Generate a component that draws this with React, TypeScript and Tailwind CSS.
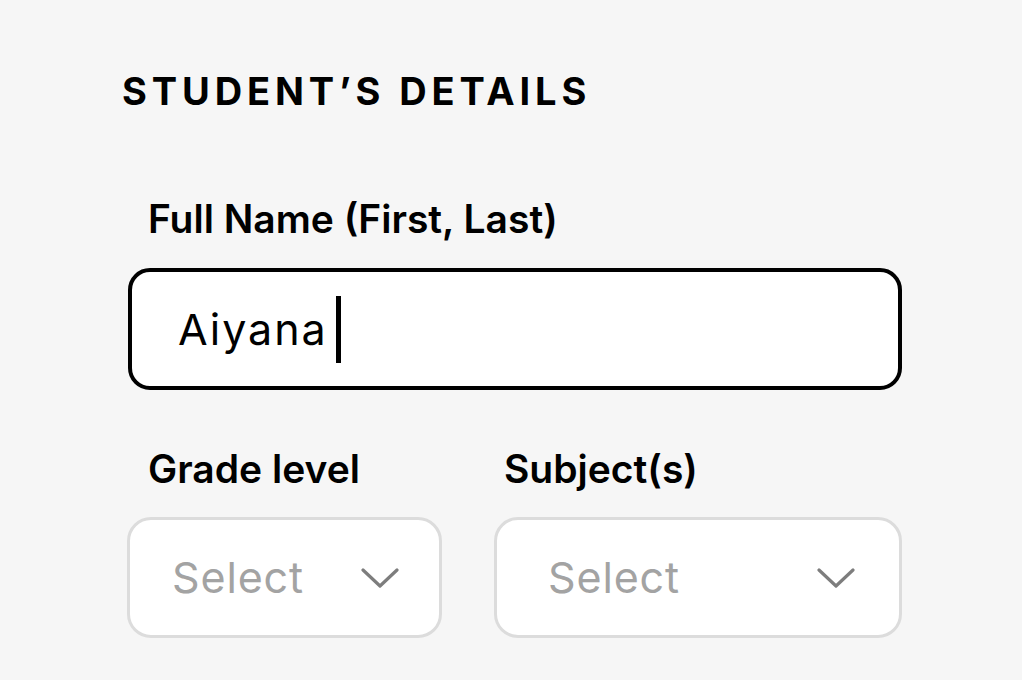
import React from "react";

function Chevron() {
  return (
    <svg width="38" height="22" viewBox="0 0 38 22" fill="none">
      <path d="M2 3 L19 19 L36 3" stroke="#7d7d7d" strokeWidth="3.2" strokeLinecap="round" strokeLinejoin="round" />
    </svg>
  );
}

export default function App() {
  return (
    <div
      className="min-h-screen bg-[#f6f6f6] text-black"
      style={{ fontFamily: "Inter, 'Noto Sans', sans-serif" }}
    >
      <div className="pt-[68px] pl-[122px]">
        <h2 className="text-[38px] leading-[46px] font-bold tracking-[0.128em]">STUDENT’S DETAILS</h2>
      </div>

      <div className="ml-[128px] w-[774px] mt-[81px]">
        <label className="block pl-[20px] text-[39px] leading-[48px] font-semibold">Full Name (First, Last)</label>
        <div className="mt-[25px] h-[122px] rounded-[22px] border-4 border-black bg-white flex items-center pl-[46px]">
          <span className="text-[43px] leading-none tracking-[0.045em]">Aiyana</span>
          <span className="ml-[8px] w-[5px] h-[67px] bg-black" />
        </div>

        <div className="mt-[55px] flex gap-[52px]">
          <div className="w-[315px] -ml-px">
            <label className="block pl-[21px] text-[39px] leading-[48px] font-semibold">Grade level</label>
            <div className="mt-[24px] h-[121px] rounded-[24px] border-[3px] border-[#dcdcdc] bg-white flex items-center justify-between pl-[42px] pr-[40px]">
              <span className="text-[43px] leading-none tracking-[0.02em] text-[#a3a3a3]">Select</span>
              <Chevron />
            </div>
          </div>
          <div className="w-[408px]">
            <label className="block pl-[10px] text-[39px] leading-[48px] font-semibold">Subject(s)</label>
            <div className="mt-[24px] h-[121px] rounded-[24px] border-[3px] border-[#dcdcdc] bg-white flex items-center justify-between pl-[51px] pr-[44px]">
              <span className="text-[43px] leading-none tracking-[0.02em] text-[#a3a3a3]">Select</span>
              <Chevron />
            </div>
          </div>
        </div>
      </div>
    </div>
  );
}
